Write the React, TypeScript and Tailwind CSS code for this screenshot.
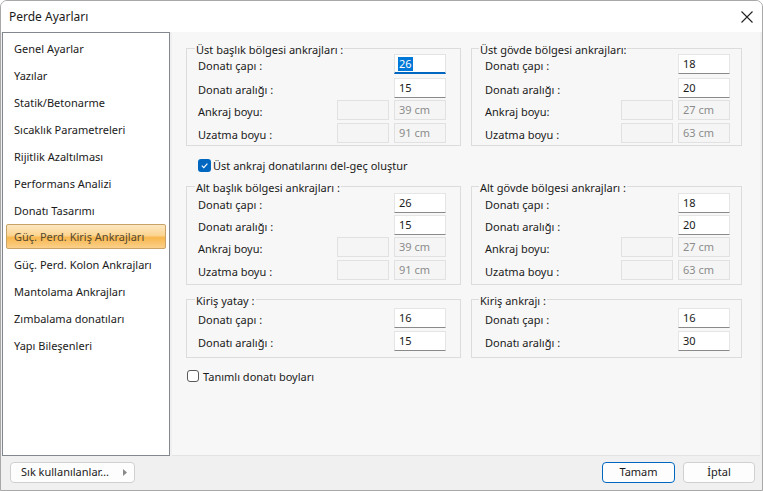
import React from "react";

const FONT = { fontFamily: '"Noto Sans", "Segoe UI", sans-serif' };

const sidebarItems = [
  "Genel Ayarlar",
  "Yazılar",
  "Statik/Betonarme",
  "Sıcaklık Parametreleri",
  "Rijitlik Azaltılması",
  "Performans Analizi",
  "Donatı Tasarımı",
  "Güç. Perd. Kiriş Ankrajları",
  "Güç. Perd. Kolon Ankrajları",
  "Mantolama Ankrajları",
  "Zımbalama donatıları",
  "Yapı Bileşenleri",
];

function Edit({ value, focused }: { value: string; focused?: boolean }) {
  if (focused) {
    return (
      <div className="w-[52px] h-[20px] bg-white border border-[#e3e3e3] border-b-2 border-b-[#0067c0] flex items-center pl-[3px]">
        <span className="bg-[#0078d7] text-white leading-[14px] px-[1px]">{value}</span>
      </div>
    );
  }
  return (
    <div className="w-[52px] h-[20px] bg-white border border-[#e5e5e5] border-b-[#8a8a8a] flex items-center pl-[4px] text-[#1a1a1a]">
      {value}
    </div>
  );
}

function Disabled({ value }: { value?: string }) {
  return (
    <div className="w-[52px] h-[20px] bg-[#f5f5f5] border border-[#e1e1e1] flex items-center pl-[4px] text-[#8c8c8c]">
      {value}
    </div>
  );
}

function Row({
  label,
  children,
  className = "",
}: {
  label: string;
  children: React.ReactNode;
  className?: string;
}) {
  return (
    <div className={"flex items-center justify-between " + className}>
      <span className="text-[#1a1a1a] relative top-[2px]">{label}</span>
      <div className="flex gap-[5px]">{children}</div>
    </div>
  );
}

function Group({
  title,
  children,
  side,
  pb,
}: {
  title: string;
  children: React.ReactNode;
  side: "l" | "r";
  pb: string;
}) {
  const left = side === "l";
  return (
    <fieldset
      className={
        "border border-[#dcdcdc] m-0 min-w-0 " +
        pb +
        " " +
        (left ? "pl-[11px] pr-[14px]" : "pl-[13px] pr-[11px]")
      }
    >
      <legend className={"px-[1px] leading-[16px] text-[#1a1a1a] " + (left ? "ml-[-3px]" : "ml-[-6px]")}>
        <span className="relative top-[2px]">{title}</span>
      </legend>
      {children}
    </fieldset>
  );
}

function FullGroup(props: {
  title: string;
  side: "l" | "r";
  vals: [string, string, string, string];
  focusFirst?: boolean;
  m: [string, string, string, string];
  pb: string;
}) {
  const { title, side, vals, focusFirst, m, pb } = props;
  return (
    <Group title={title} side={side} pb={pb}>
      <Row label="Donatı çapı :" className={m[0]}>
        <Edit value={vals[0]} focused={focusFirst} />
      </Row>
      <Row label="Donatı aralığı :" className={m[1]}>
        <Edit value={vals[1]} />
      </Row>
      <Row label="Ankraj boyu:" className={m[2]}>
        <Disabled />
        <Disabled value={vals[2]} />
      </Row>
      <Row label="Uzatma boyu :" className={m[3]}>
        <Disabled />
        <Disabled value={vals[3]} />
      </Row>
    </Group>
  );
}

function SmallGroup(props: { title: string; side: "l" | "r"; vals: [string, string] }) {
  const { title, side, vals } = props;
  return (
    <Group title={title} side={side} pb="pb-[6px]">
      <Row label="Donatı çapı :" className="mt-[1px]">
        <Edit value={vals[0]} />
      </Row>
      <Row label="Donatı aralığı :" className="mt-[3px]">
        <Edit value={vals[1]} />
      </Row>
    </Group>
  );
}

function CheckBox({ checked }: { checked?: boolean }) {
  if (checked) {
    return (
      <div className="w-[13px] h-[13px] rounded-[3px] bg-[#0067c0] flex items-center justify-center">
        <svg width="9" height="9" viewBox="0 0 10 10">
          <path d="M2 5.2 L4.2 7.3 L8.2 2.8" fill="none" stroke="white" strokeWidth="1.3" />
        </svg>
      </div>
    );
  }
  return <div className="w-[12px] h-[12px] rounded-[3px] border border-[#5a5a5a] bg-white" />;
}

export default function App() {
  return (
    <div
      className="w-[763px] h-[491px] bg-[#f0f0f0] border border-[#a8a8a8] rounded-t-[7px] overflow-hidden flex flex-col text-[11px]"
      style={FONT}
    >
      {/* Title bar */}
      <div className="h-[31px] bg-white flex items-center justify-between pl-[8px] pr-[8px] shrink-0">
        <span className="text-[12px] text-[#1a1a1a]">Perde Ayarları</span>
        <svg width="12" height="12" viewBox="0 0 12 12" className="mr-[1px]">
          <path d="M0.5 0.5 L11.5 11.5 M11.5 0.5 L0.5 11.5" stroke="#222" strokeWidth="1.1" />
        </svg>
      </div>

      {/* Body */}
      <div className="flex h-[424px] pl-[1px] pr-[2px] shrink-0">
        {/* Sidebar */}
        <div className="w-[168px] bg-white border border-[#828790] pt-[3px] px-[3px] shrink-0">
          {sidebarItems.map((it, i) =>
            i === 7 ? (
              <div
                key={it}
                className="h-[25px] mt-[-1px] mb-[3px] pt-[2px] flex items-center pl-[7px] rounded-[2px] border border-[#c8a266] bg-[linear-gradient(to_bottom,#fde7c1_0%,#fbd591_45%,#f8b74e_55%,#fbd08a_100%)] text-[#55482f]"
              >
                {it}
              </div>
            ) : (
              <div key={it} className="h-[27px] flex items-center pl-[8px] text-[#1a1a1a]">
                {it}
              </div>
            )
          )}
        </div>

        {/* Content */}
        <div className="flex-1 ml-[2px] bg-[#f7f7f7] border-b border-[#e3e3e3] pl-[14px] pr-[16px] pt-[8px]">
          <div className="grid grid-cols-[275px_271px] gap-x-[10px]">
            <FullGroup
              title="Üst başlık bölgesi ankrajları :"
              side="l"
              vals={["26", "15", "39 cm", "91 cm"]}
              focusFirst
              m={["mt-[-2px]", "mt-[4px]", "mt-[2px]", "mt-[3px]"]}
              pb="pb-[2px]"
            />
            <FullGroup
              title="Üst gövde bölgesi ankrajları:"
              side="r"
              vals={["18", "20", "27 cm", "63 cm"]}
              m={["mt-[-2px]", "mt-[4px]", "mt-[2px]", "mt-[3px]"]}
              pb="pb-[2px]"
            />
          </div>

          <div className="flex items-center gap-[2px] pl-[12px] mt-[13px] h-[13px]">
            <CheckBox checked />
            <span className="text-[#1a1a1a] relative top-[1px]">Üst ankraj donatılarını del-geç oluştur</span>
          </div>

          <div className="grid grid-cols-[275px_271px] gap-x-[10px] mt-[6px]">
            <FullGroup
              title="Alt başlık bölgesi ankrajları :"
              side="l"
              vals={["26", "15", "39 cm", "91 cm"]}
              m={["mt-[-1px]", "mt-[2px]", "mt-[2px]", "mt-[3px]"]}
              pb="pb-[4px]"
            />
            <FullGroup
              title="Alt gövde bölgesi ankrajları :"
              side="r"
              vals={["18", "20", "27 cm", "63 cm"]}
              m={["mt-[-1px]", "mt-[2px]", "mt-[2px]", "mt-[3px]"]}
              pb="pb-[4px]"
            />
          </div>

          <div className="grid grid-cols-[275px_271px] gap-x-[10px] mt-[6px]">
            <SmallGroup title="Kiriş yatay :" side="l" vals={["16", "15"]} />
            <SmallGroup title="Kiriş ankrajı :" side="r" vals={["16", "30"]} />
          </div>

          <div className="flex items-center gap-[4px] pl-[1px] mt-[12px] h-[12px]">
            <CheckBox />
            <span className="text-[#1a1a1a] relative top-[1px]">Tanımlı donatı boyları</span>
          </div>
        </div>
      </div>

      {/* Footer */}
      <div className="flex-1 flex items-center justify-between pl-[9px] pr-[7px] pb-[1px]">
        <div className="w-[125px] h-[21px] bg-[#fdfdfd] border border-[#d0d0d0] rounded-[4px] flex items-center justify-between pl-[10px] pr-[7px] text-[#1a1a1a]">
          <span>Sık kullanılanlar…</span>
          <svg width="4" height="7" viewBox="0 0 4 7">
            <path d="M0 0 L4 3.5 L0 7 Z" fill="#8a8a8a" />
          </svg>
        </div>
        <div className="flex gap-[8px]">
          <div className="w-[73px] h-[21px] bg-[#fdfdfd] border border-[#0067c0] rounded-[4px] flex items-center justify-center text-[#1a1a1a]">
            Tamam
          </div>
          <div className="w-[72px] h-[21px] bg-[#fdfdfd] border border-[#d0d0d0] rounded-[4px] flex items-center justify-center text-[#1a1a1a]">
            İptal
          </div>
        </div>
      </div>
    </div>
  );
}
